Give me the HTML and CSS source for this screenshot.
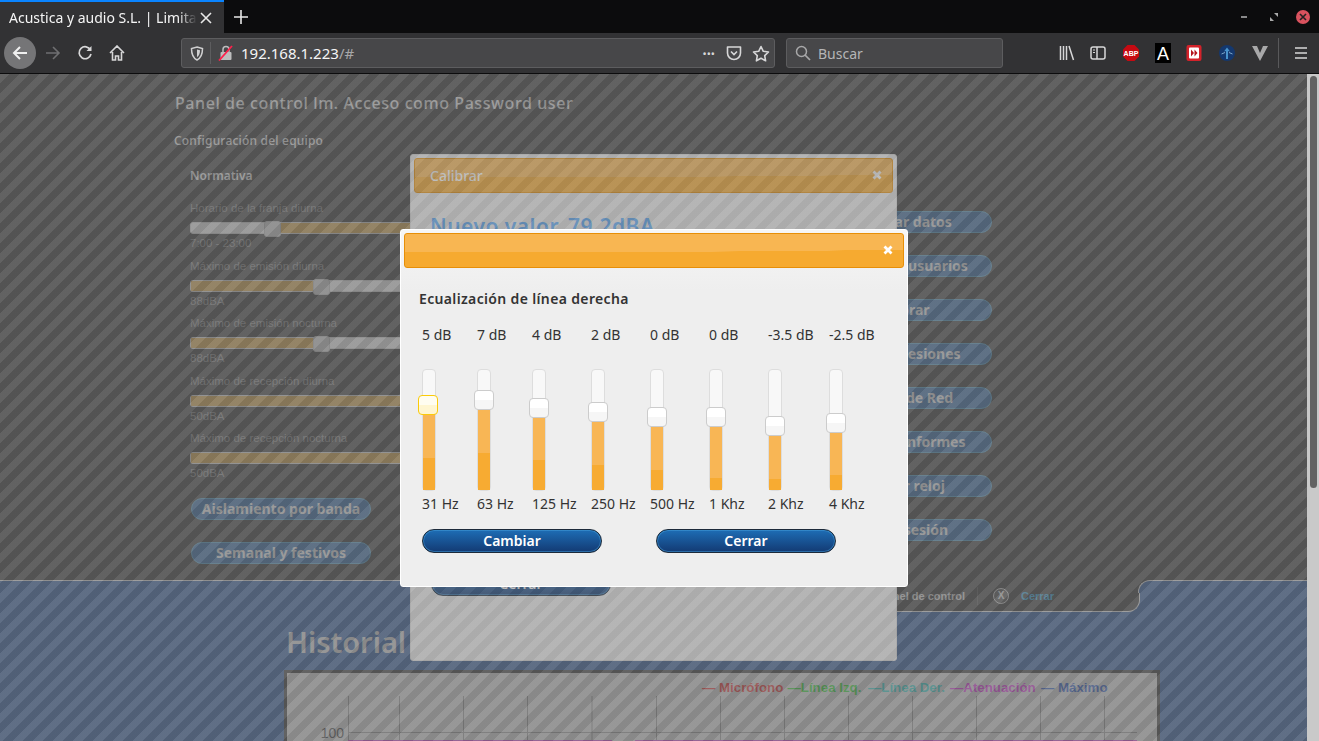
FILE: index.html
```html
<!doctype html>
<html lang="es">
  <head>
    <meta charset="utf-8">
    <title>Acustica y audio S.L. | Limitador</title>
    <link rel="stylesheet" href="styles.css">
  </head>
  <body>
    <header class="browser">
      <div class="tabbar">
        <div class="tab-active">
          <span class="tab-title">Acustica y audio S.L. | Limitador</span>
          <svg class="tab-close" width="12" height="12" viewBox="0 0 12 12"><path d="M1 1l10 10M11 1L1 11" stroke="#e8e8e8" stroke-width="1.6"/></svg>
        </div>
        <svg class="tab-new" width="14" height="14" viewBox="0 0 14 14"><path d="M7 0v14M0 7h14" stroke="#e8e8e8" stroke-width="1.6"/></svg>
        <div class="window-btns">
          <svg width="8" height="8" viewBox="0 0 8 8"><path d="M1 4h6" stroke="#aaa" stroke-width="1.6"/></svg>
          <svg width="8" height="8" viewBox="0 0 8 8"><path d="M4 0h4v4zM0 4l4 4H0z" fill="#aaa"/></svg>
          <span class="win-close"><svg width="8" height="8" viewBox="0 0 8 8"><path d="M1 1l6 6M7 1L1 7" stroke="#222" stroke-width="1.6"/></svg></span>
        </div>
      </div>
      <div class="toolbar">
        <span class="back-btn"><svg width="16" height="16" viewBox="0 0 16 16"><path d="M15 8H2M8 2L2 8l6 6" fill="none" stroke="#f0f0f0" stroke-width="2"/></svg></span>
        <svg class="nav-icon" width="16" height="16" viewBox="0 0 16 16"><path d="M1 8h13M8 2l6 6-6 6" fill="none" stroke="#6f6f71" stroke-width="1.6"/></svg>
        <svg class="nav-icon" width="16" height="16" viewBox="0 0 16 16"><path d="M13.5 5A6 6 0 1 0 14 9" fill="none" stroke="#d7d7d8" stroke-width="1.7"/><path d="M14.5 1v5h-5z" fill="#d7d7d8"/></svg>
        <svg class="nav-icon" width="16" height="16" viewBox="0 0 16 16"><path d="M1 8l7-7 7 7M3.5 7v8h3v-4h3v4h3V7" fill="none" stroke="#d7d7d8" stroke-width="1.6"/></svg>
        <div class="urlbar">
          <svg width="14" height="15" viewBox="0 0 14 15"><path d="M7 1l5.5 1.5c0 6-1.5 9.500-5.500 11.500C3 12 1.500 8.500 1.500 2.500z" fill="none" stroke="#cfcfd0" stroke-width="1.5"/><path d="M7 3.500l3 .8c0 3.500-1 5.500-3 7z" fill="#cfcfd0"/></svg>
          <span class="url-sep"></span>
          <svg width="16" height="16" viewBox="0 0 16 16"><rect x="2.500" y="7" width="11" height="8" rx="1" fill="#bdbdbe"/><path d="M5 7V4.500a3 3 0 0 1 6 0V7" fill="none" stroke="#bdbdbe" stroke-width="1.500"/><path d="M1 15.500L14 1" stroke="#ff1f4b" stroke-width="1.800"/></svg>
          <span class="url-text">192.168.1.223<span class="url-path">/#</span></span>
          <span class="url-dots">•••</span>
          <svg width="16" height="16" viewBox="0 0 16 16"><path d="M1.500 2h13v6a6.500 6.500 0 0 1-13 0z" fill="none" stroke="#d7d7d8" stroke-width="1.600" stroke-linejoin="round"/><path d="M5 6.500L8 9.500l3-3" fill="none" stroke="#d7d7d8" stroke-width="1.600"/></svg>
          <svg width="18" height="17" viewBox="0 0 18 17"><path d="M9 1.500l2.300 4.800 5.200.7-3.800 3.600.9 5.200L9 13.300l-4.600 2.500.9-5.200L1.500 7l5.200-.7z" fill="none" stroke="#d7d7d8" stroke-width="1.600" stroke-linejoin="round"/></svg>
        </div>
        <div class="searchbar">
          <svg width="16" height="16" viewBox="0 0 16 16"><circle cx="6.500" cy="6.500" r="5" fill="none" stroke="#a8a8a9" stroke-width="1.500"/><path d="M10 10l5 5" stroke="#a8a8a9" stroke-width="1.700"/></svg>
          <span>Buscar</span>
        </div>
        <div class="tools">
          <svg width="16" height="16" viewBox="0 0 16 16"><path d="M1.500 1v14M4.500 1v14M7.500 1v14M10 1l4.500 14" stroke="#d7d7d8" stroke-width="1.500"/></svg>
          <svg width="16" height="16" viewBox="0 0 16 16"><rect x="1" y="2" width="14" height="12" rx="2" fill="none" stroke="#d7d7d8" stroke-width="1.500"/><path d="M7 2v12" stroke="#d7d7d8" stroke-width="1.500"/><path d="M3 5h2M3 7.500h2" stroke="#d7d7d8"/></svg>
          <svg width="18" height="18" viewBox="0 0 18 18"><path d="M5.500 1h7L17 5.500v7L12.500 17h-7L1 12.500v-7z" fill="#c60a12"/><text class="abp-text" x="9" y="11.500" text-anchor="middle">ABP</text></svg>
          <svg width="16" height="20" viewBox="0 0 16 20"><rect width="16" height="20" fill="#000"/><text class="a-text" x="8" y="17" text-anchor="middle">A</text></svg>
          <svg width="16" height="18" viewBox="0 0 16 18"><rect x=".5" y="1" width="15" height="16" rx="2" fill="#d3222a"/><rect x="3" y="3.500" width="10" height="11" rx="1" fill="#fff"/><path d="M5 5.500l3 3.500-3 3.500zM8.500 5.500l3 3.500-3 3.500z" fill="#b5161e"/></svg>
          <svg width="18" height="18" viewBox="0 0 18 18"><circle cx="9" cy="9" r="8" fill="#14386e"/><path d="M9 3.500l3 4-2-.4V15H8V7.100l-2 .4z" fill="#4a94cc"/><path d="M3.500 10L7 8.500M14.500 10L11 8.500" stroke="#7fa8cc"/></svg>
          <svg width="18" height="16" viewBox="0 0 18 16"><path d="M1 1h5l3 7 3-7h5l-8 15z" fill="#a8a8a9"/></svg>
        </div>
        <span class="tool-sep"></span>
        <svg class="menu-icon" width="14" height="14" viewBox="0 0 14 14"><path d="M1 2h12M1 7h12M1 12h12" stroke="#d7d7d8" stroke-width="1.600"/></svg>
      </div>
    </header>

    <div class="viewport">
      <div class="content">
        <section class="panel">
          <h1>Panel de control lm. Acceso como Password user</h1>
          <h2>Configuración del equipo</h2>
          <div class="columns">
            <div class="settings">
              <h3>Normativa</h3>
              <div class="field">
                <label>Horario de la franja diurna</label>
                <div class="hslider"><div class="hrange" style="left:82px;right:0"></div><span class="hhandle" style="left:82px"></span></div>
                <div class="hvalue">7:00 - 23:00</div>
              </div>
              <div class="field">
                <label>Máximo de emisión diurna</label>
                <div class="hslider"><div class="hrange" style="left:0;width:131px"></div><span class="hhandle" style="left:131px"></span></div>
                <div class="hvalue">88dBA</div>
              </div>
              <div class="field">
                <label>Máximo de emisión nocturna</label>
                <div class="hslider"><div class="hrange" style="left:0;width:131px"></div><span class="hhandle" style="left:131px"></span></div>
                <div class="hvalue">88dBA</div>
              </div>
              <div class="field">
                <label>Máximo de recepción diurna</label>
                <div class="hslider"><div class="hrange" style="left:0;width:280px"></div></div>
                <div class="hvalue">50dBA</div>
              </div>
              <div class="field">
                <label>Máximo de recepción nocturna</label>
                <div class="hslider"><div class="hrange" style="left:0;width:280px"></div></div>
                <div class="hvalue">50dBA</div>
              </div>
              <div class="left-btns">
                <a class="pill">Aislamiento por banda</a>
                <a class="pill">Semanal y festivos</a>
              </div>
            </div>
            <div class="actions">
              <a class="pill">Guardar datos</a>
              <a class="pill">Gestionar usuarios</a>
              <a class="pill">Calibrar</a>
              <a class="pill">Gestión sesiones</a>
              <a class="pill">Ajustes de Red</a>
              <a class="pill">Exportar informes</a>
              <a class="pill">Ajustar reloj</a>
              <a class="pill">Cerrar sesión</a>
            </div>
          </div>
        </section>

        <section class="history">
          <div class="tab-foot">
            <span class="foot-link">Panel de control</span>
            <span class="foot-sep"></span>
            <span class="foot-x">X</span>
            <span class="foot-close">Cerrar</span>
          </div>
          <h2 class="history-title">Historial</h2>
          <div class="chart">
            <svg width="870" height="80" viewBox="287 672 870 80">
              <g class="grid">
                <path d="M348.500 695V745M399.500 695V745M463.500 695V745M527.500 695V745M592 695V745M656.500 695V745M720.500 695V745M784.500 695V745M848.500 695V745M912.500 695V745M976.500 695V745M1040.500 695V745M1104.500 695V745M348 731.500H1137"/>
              </g>
              <path d="M348 740H612M635 740H1137" stroke="#e020e0" stroke-width="2"/>
              <text class="axis" x="344" y="737" text-anchor="end">100</text>
              <text class="legend" y="691">
                <tspan x="702" fill="#ff0000">— Micrófono</tspan>
                <tspan x="787.500" fill="#00e000">—Línea Izq.</tspan>
                <tspan x="868" fill="#00d8d0">—Línea Der.</tspan>
                <tspan x="950" fill="#f000f0">—Atenuación</tspan>
                <tspan x="1041" fill="#0040d0">— Máximo</tspan>
              </text>
            </svg>
          </div>
        </section>

        <div class="overlay"></div>

        <div class="dialog dialog-calibrar">
          <div class="dialog-bar">
            <span class="dialog-title">Calibrar</span>
            <svg width="10" height="10" viewBox="0 0 10 10"><path d="M1.500 1.500l7 7M8.500 1.500l-7 7" stroke="#fff" stroke-width="2.800"/></svg>
          </div>
          <div class="new-value">Nuevo valor. 79,2dBA</div>
          <a class="blue-btn calibrar-close">Cerrar</a>
        </div>

        <div class="overlay"></div>

        <div class="dialog dialog-eq">
          <div class="dialog-bar">
            <span class="dialog-title"></span>
            <svg width="10" height="10" viewBox="0 0 10 10"><path d="M1.500 1.500l7 7M8.500 1.500l-7 7" stroke="#fff" stroke-width="2.800"/></svg>
          </div>
          <h3 class="eq-title">Ecualización de línea derecha</h3>
          <div class="eq">
            <div class="band">
              <span>5 dB</span>
              <div class="vslider"><div class="vrange" style="--level:77px;--gloss:32px"></div><span class="vhandle is-active" style="--level:86px"></span></div>
              <span>31 Hz</span>
            </div>
            <div class="band">
              <span>7 dB</span>
              <div class="vslider"><div class="vrange" style="--level:82px;--gloss:37px"></div><span class="vhandle" style="--level:91px"></span></div>
              <span>63 Hz</span>
            </div>
            <div class="band">
              <span>4 dB</span>
              <div class="vslider"><div class="vrange" style="--level:74px;--gloss:30px"></div><span class="vhandle" style="--level:83px"></span></div>
              <span>125 Hz</span>
            </div>
            <div class="band">
              <span>2 dB</span>
              <div class="vslider"><div class="vrange" style="--level:70px;--gloss:25px"></div><span class="vhandle" style="--level:79px"></span></div>
              <span>250 Hz</span>
            </div>
            <div class="band">
              <span>0 dB</span>
              <div class="vslider"><div class="vrange" style="--level:65px;--gloss:20px"></div><span class="vhandle" style="--level:74px"></span></div>
              <span>500 Hz</span>
            </div>
            <div class="band">
              <span>0 dB</span>
              <div class="vslider"><div class="vrange" style="--level:65px;--gloss:12px"></div><span class="vhandle" style="--level:74px"></span></div>
              <span>1 Khz</span>
            </div>
            <div class="band">
              <span>-3.5 dB</span>
              <div class="vslider"><div class="vrange" style="--level:56px;--gloss:11px"></div><span class="vhandle" style="--level:65px"></span></div>
              <span>2 Khz</span>
            </div>
            <div class="band">
              <span>-2.5 dB</span>
              <div class="vslider"><div class="vrange" style="--level:59px;--gloss:15px"></div><span class="vhandle" style="--level:68px"></span></div>
              <span>4 Khz</span>
            </div>
          </div>
          <div class="eq-btns">
            <a class="blue-btn">Cambiar</a>
            <a class="blue-btn">Cerrar</a>
          </div>
        </div>
      </div>
      <div class="scrollbar"><span class="scroll-thumb"></span></div>
    </div>
  </body>
</html>
```

FILE: styles.css
```css
*, *::before, *::after {
  box-sizing: border-box;
}

html, body {
  margin: 0;
  height: 741px;
  overflow: hidden;
}

body {
  font-family: "Noto Sans", sans-serif;
  display: flex;
  flex-direction: column;
  background: #111;
}

/* browser chrome */
.browser {
  height: 74px;
  flex: none;
}

.tabbar {
  height: 33px;
  background: #0c0c0d;
  display: flex;
  align-items: center;
}

.tab-active {
  width: 224px;
  height: 33px;
  background: #323234;
  border-top: 2px solid #0a84ff;
  display: flex;
  align-items: center;
  padding-left: 9px;
  color: #f5f5f5;
  font-size: 14px;
}

.tab-title {
  width: 188px;
  white-space: nowrap;
  overflow: hidden;
  -webkit-mask-image: linear-gradient(to right, #000 90%, transparent);
  mask-image: linear-gradient(to right, #000 90%, transparent);
}

.tab-close {
  margin-left: 3px;
}

.tab-new {
  margin-left: 10px;
}

.window-btns {
  margin-left: auto;
  display: flex;
  align-items: center;
  gap: 22px;
  padding-right: 9px;
}

.win-close {
  width: 14px;
  height: 14px;
  margin-left: -4px;
  border-radius: 50%;
  background: #d9525e;
  display: flex;
  align-items: center;
  justify-content: center;
}

.toolbar {
  height: 41px;
  background: #323234;
  border-bottom: 1px solid #0c0c0d;
  display: flex;
  align-items: center;
  padding-left: 4px;
}

.back-btn {
  width: 32px;
  height: 32px;
  border-radius: 50%;
  background: #757577;
  display: flex;
  align-items: center;
  justify-content: center;
}

.nav-icon {
  margin-left: 16px;
}

.toolbar .back-btn + .nav-icon {
  margin-left: 9px;
}

.urlbar {
  margin-left: 56px;
  width: 594px;
  height: 30px;
  background: #474749;
  border: 1px solid #5d5d5f;
  border-radius: 3px;
  display: flex;
  align-items: center;
  padding-left: 8px;
  padding-right: 4px;
  font-size: 15px;
  color: #f5f5f5;
}

.url-sep {
  width: 1px;
  height: 22px;
  background: #5d5d5f;
  margin: 0 7px 0 6px;
}

.url-text {
  margin-left: 7px;
  flex: 1;
}

.url-path {
  color: #a8a8a9;
}

.url-dots {
  font-size: 11px;
  color: #d7d7d8;
  margin-right: 11px;
  letter-spacing: 0;
}

.urlbar svg:last-child {
  margin-left: 10px;
}

.searchbar {
  margin-left: 11px;
  width: 217px;
  height: 30px;
  background: #474749;
  border: 1px solid #5d5d5f;
  border-radius: 3px;
  display: flex;
  align-items: center;
  gap: 7px;
  padding-left: 8px;
  font-size: 14px;
  color: #b5b5b6;
}

.tools {
  margin-left: 56px;
  width: 210px;
  display: flex;
  align-items: center;
  justify-content: space-between;
}

.abp-text {
  font: bold 7px "Liberation Sans", sans-serif;
  fill: #fff;
}

.a-text {
  font: 18px "Liberation Sans", sans-serif;
  fill: #fff;
}

.tool-sep {
  width: 1px;
  height: 30px;
  background: #59595b;
  margin-left: 9px;
}

.menu-icon {
  margin-left: 15px;
}

/* page behind the dialogs */
.viewport {
  flex: 1;
  display: flex;
  min-height: 0;
}

.content {
  position: relative;
  flex: 1;
  overflow: hidden;
  background: #0844a0;
}

.scrollbar {
  width: 12px;
  background: #c9c9c9;
  padding: 2px 2px 0 3px;
}

.scroll-thumb {
  display: block;
  height: 412px;
  background: #626262;
  border-radius: 4px;
}

.panel {
  height: 507px;
  background: #111;
  border-bottom: 1px solid #fff;
  padding: 19px 0 0 175px;
  color: #fff;
}

.panel h1 {
  margin: 0;
  font-size: 16px;
  line-height: 20px;
  font-weight: 500;
  letter-spacing: .58px;
}

.panel h2 {
  margin: 20px 0 0 -1px;
  font-size: 12px;
  line-height: 16px;
  font-weight: 500;
  letter-spacing: .2px;
}

.columns {
  margin: 19px 0 0 15px;
  width: 802px;
  display: flex;
  justify-content: space-between;
}

.settings {
  width: 400px;
}

.settings h3 {
  margin: 0 0 17px;
  font-size: 12px;
  line-height: 16px;
  font-weight: 600;
}

.field {
  margin-bottom: 8.5px;
  font: 11.5px/14px "Liberation Sans", sans-serif;
  color: #787878;
}

.field label {
  display: block;
}

.hslider {
  position: relative;
  height: 12px;
  margin-top: 7px;
  background: #fff;
  border: 1px solid #d8d8d8;
  border-radius: 3px;
}

.hrange {
  position: absolute;
  top: 0;
  bottom: 0;
  background: #dc9a24;
}

.hhandle {
  position: absolute;
  top: -2px;
  width: 17px;
  height: 16px;
  margin-left: -9px;
  background: #d8d8d8;
  border: 1px solid #b8b8b8;
  border-radius: 3px;
}

.hvalue {
  margin-top: 2px;
}

.left-btns {
  margin: 18px 0 0 1px;
  width: 180px;
  display: flex;
  flex-direction: column;
  gap: 22px;
}

.actions {
  width: 180px;
  padding-top: 43px;
  display: flex;
  flex-direction: column;
  gap: 22px;
}

.pill {
  display: block;
  height: 22px;
  border-radius: 11px;
  background: #0850a0;
  border: 1px solid #2a90c8;
  color: #f4f4f4;
  font-size: 14px;
  line-height: 20px;
  font-weight: 700;
  text-align: center;
  white-space: nowrap;
}

.history {
  padding-left: 284px;
}

.tab-foot {
  position: relative;
  margin: -1px 0 0 496px;
  width: 360px;
  height: 32px;
  background: #111;
  border: 1px solid #fff;
  border-width: 0 1px 1px 0;
  border-bottom-right-radius: 12px;
  display: flex;
  align-items: center;
  justify-content: flex-end;
  padding-right: 85px;
  padding-top: 1px;
  font: bold 11px "Liberation Sans", sans-serif;
  color: #e0e0e0;
}

.tab-foot::before {
  content: "";
  position: absolute;
  left: 100%;
  top: 0;
  width: 12px;
  height: 12px;
  background: #111;
}

.tab-foot::after {
  content: "";
  position: absolute;
  left: calc(100% - 1px);
  top: 0;
  width: 13px;
  height: 13px;
  background: #0844a0;
  border: 1px solid #fff;
  border-width: 1px 0 0 1px;
  border-top-left-radius: 12px;
}

.foot-sep {
  width: 1px;
  height: 18px;
  background: #333;
  margin: 0 15px 0 12px;
}

.foot-x {
  width: 16px;
  height: 16px;
  border-radius: 50%;
  background: #333;
  border: 1px solid #ddd;
  color: #eee;
  font-size: 10px;
  line-height: 14px;
  text-align: center;
  margin-right: 12px;
}

.foot-close {
  color: #10a8f0;
}

.history-title {
  margin: 12px 0 0 2px;
  font-size: 29px;
  line-height: 36px;
  font-weight: 600;
  color: #e8e8e8;
}

.chart {
  margin-top: 10px;
  width: 876px;
  height: 100px;
  background: #e8e8e8;
  border: 3px solid #111;
}

.chart svg {
  display: block;
}

.grid path {
  stroke: #888;
  stroke-width: 1;
  fill: none;
}

.axis {
  font: 14px "Liberation Sans", sans-serif;
  fill: #222;
}

.legend {
  font: bold 13.3px "Liberation Sans", sans-serif;
}

/* the two modal layers */
.overlay {
  position: absolute;
  inset: 0;
  background: repeating-linear-gradient(135deg,
    rgba(125, 125, 125, .5) 0, rgba(125, 125, 125, .5) 7.07px,
    rgba(105, 105, 105, .5) 7.07px, rgba(105, 105, 105, .5) 14.14px);
}

.dialog {
  position: absolute;
  background: linear-gradient(#f6f6f6, #eee 60px);
  border: 1px solid #fff;
  border-radius: 3px;
  padding: 3px;
}

.dialog-calibrar {
  left: 410px;
  top: 80px;
  width: 487px;
  height: 507px;
  background: #eee;
  border-color: #ddd;
}

.dialog-eq {
  left: 400px;
  top: 155px;
  width: 508px;
  height: 358px;
}

.dialog-bar {
  height: 35px;
  border: 1px solid #e78f08;
  border-radius: 3px;
  background: radial-gradient(ellipse 140% 55% at 30% 0, #f8b652 99%, #f6aa30 100%);
  display: flex;
  align-items: center;
  justify-content: space-between;
  padding: 0 10px 1px 15px;
  color: #fff;
  font-size: 14px;
}

.dialog-title {
  font-weight: 500;
}

.new-value {
  margin: 18px 0 0 16px;
  font-size: 21px;
  line-height: 30px;
  font-weight: 600;
  color: #58a8f8;
  letter-spacing: .5px;
}

.blue-btn {
  display: block;
  width: 180px;
  height: 24px;
  border-radius: 12px;
  border: 1px solid #1c2a3a;
  box-shadow: inset 0 0 0 1px rgba(70, 160, 220, .5);
  background: linear-gradient(#1e6db5, #133a73);
  color: #fff;
  font-size: 14px;
  line-height: 22px;
  font-weight: 600;
  text-align: center;
}

.calibrar-close {
  margin: 331px 0 0 17px;
}

.eq-title {
  margin: 22px 0 0 15px;
  font-size: 14px;
  line-height: 18px;
  font-weight: 600;
  color: #333;
  letter-spacing: .35px;
}

.eq {
  margin: 18px 0 0 18px;
  display: grid;
  grid-template-columns: 55px 55px 59px 59px 59px 59px 61px 61px;
  font-size: 14px;
  line-height: 18px;
  color: #333;
}

.band {
  display: flex;
  flex-direction: column;
  white-space: nowrap;
}

.vslider {
  position: relative;
  width: 14px;
  height: 122px;
  margin: 25px 0 4px;
  background: #f8f8f8;
  border: 1px solid #ddd;
  border-radius: 4px;
}

.vrange {
  position: absolute;
  left: 0;
  right: 0;
  bottom: 0;
  height: var(--level);
  background: linear-gradient(to top, #f7ab32 var(--gloss), #f8b655 var(--gloss));
}

.vhandle {
  position: absolute;
  left: -4px;
  bottom: calc(var(--level) - 11px);
  width: 20px;
  height: 20px;
  background: linear-gradient(#fff 0, #fff 50%, #f6f6f6 50%);
  border: 1px solid #ccc;
  border-radius: 4px;
}

.vhandle.is-active {
  left: -5px;
  background: linear-gradient(#fffdf0 0, #fffdf0 50%, #fff6d0 50%);
  border-color: #fbcb09;
}

.eq-btns {
  margin: 16px 0 0 18px;
  display: flex;
  gap: 54px;
}
```
